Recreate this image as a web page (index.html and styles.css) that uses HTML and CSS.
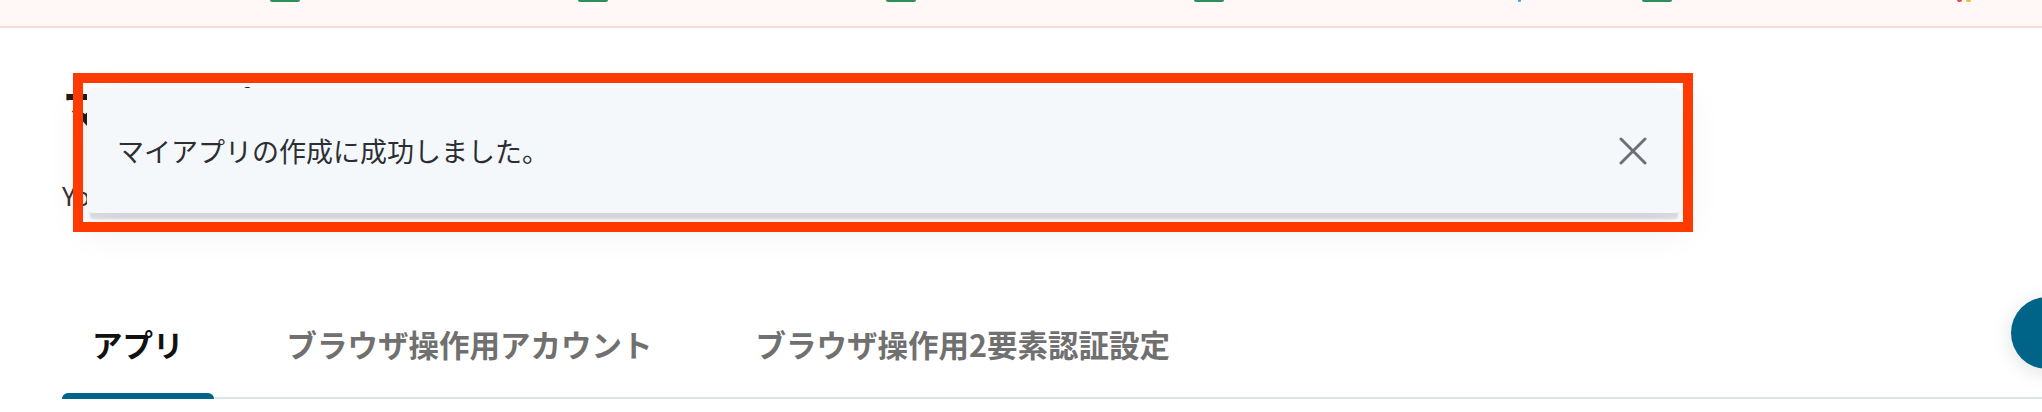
FILE: index.html
```html
<!DOCTYPE html>
<html lang="ja">
<head>
    <meta charset="UTF-8">
    <meta name="viewport" content="width=device-width, initial-scale=1.0">
    <title>マイアプリ</title>
    <link rel="stylesheet" href="styles.css">
</head>
<body>
    <!-- Top bar (icons cut off at the top edge) -->
    <header class="topbar">
        <span class="nav-icon green"></span>
        <span class="nav-icon green"></span>
        <span class="nav-icon green"></span>
        <span class="nav-icon green"></span>
        <span class="nav-dot blue"></span>
        <span class="nav-icon green near"></span>
        <span class="nav-dot red"></span>
        <span class="nav-dot yellow"></span>
    </header>

    <!-- Page content -->
    <main class="main-content">
        <h1 class="page-title">マイアプリ</h1>
        <p class="page-sub">Yoomと連携しているアプリの一覧です。</p>

        <nav class="tabs">
            <a class="tab active" href="#">アプリ</a>
            <a class="tab" href="#">ブラウザ操作用アカウント</a>
            <a class="tab" href="#">ブラウザ操作用2要素認証設定</a>
        </nav>
    </main>

    <!-- Toast notification -->
    <div class="toast">
        <span class="toast-text">マイアプリの作成に成功しました。</span>
        <button class="toast-close" type="button" aria-label="閉じる">
            <svg width="28" height="28" viewBox="0 0 28 28" fill="none">
                <path d="M2 2L26 26M26 2L2 26" stroke="#6d7176" stroke-width="3" stroke-linecap="round"/>
            </svg>
        </button>
    </div>
    <div class="highlight"></div>

    <button class="fab" type="button" aria-label="ヘルプ"></button>
</body>
</html>
```

FILE: styles.css
```css
:root {
    --color-primary: #006388;
    --color-text: #2b2e33;
    --color-muted: #707070;
    --color-line: #dfe3ea;
    --font-family: "Noto Sans CJK JP", "Noto Sans", sans-serif;
}

* {
    box-sizing: border-box;
    margin: 0;
    padding: 0;
}

body {
    width: 2042px;
    height: 412px;
    overflow: hidden;
    background: #fff;
    color: var(--color-text);
    font-family: var(--font-family);
}

/* Top bar */
.topbar {
    display: flex;
    align-items: flex-start;
    height: 28px;
    padding-left: 270px;
    background: #fff8f6;
    border-bottom: 2px solid #f9ddd4;
}

.nav-icon {
    width: 30px;
    height: 2px;
    margin-left: 278px;
    border-radius: 0 0 3px 3px;
}

.nav-icon:first-child {
    margin-left: 0;
}

.nav-icon.near {
    margin-left: 121px;
}

.nav-dot {
    width: 5px;
    height: 2px;
    margin-left: 4px;
    border-radius: 0 0 2px 2px;
}

.nav-dot.blue {
    width: 3px;
    margin-left: 294px;
}

.nav-dot.red {
    margin-left: 285px;
}

.green { background: #2f8f5b; }
.blue { background: #2ea8f0; }
.red { background: #f0405a; }
.yellow { background: #f9b829; }

/* Main */
.main-content {
    padding: 49px 0 0 62px;
}

.page-title {
    font-size: 48px;
    line-height: 60px;
    font-weight: 700;
    color: #1d1d1f;
}

.page-sub {
    margin-top: 41px;
    font-size: 26px;
    line-height: 34px;
    color: #333;
}

/* Tabs */
.tabs {
    display: flex;
    gap: 43px;
    margin-top: 112px;
    border-bottom: 2px solid var(--color-line);
}

.tab {
    position: relative;
    padding: 0 30px 33px;
    font-size: 30.5px;
    line-height: 40px;
    font-weight: 700;
    color: var(--color-muted);
    text-decoration: none;
}

.tab.active {
    color: #111;
}

.tab.active::after {
    content: "";
    position: absolute;
    left: 0;
    right: 0;
    bottom: -2px;
    height: 6px;
    border-radius: 6px 6px 0 0;
    background: var(--color-primary);
}

/* Toast */
.toast {
    position: absolute;
    top: 88px;
    left: 87px;
    width: 1594px;
    height: 125px;
    display: flex;
    align-items: center;
    justify-content: space-between;
    padding: 0 34px 0 30px;
    background: #f5f8fb;
    border-radius: 6px;
    box-shadow: 0 9px 2px -3px rgba(20, 25, 45, 0.12), 0 12px 40px rgba(30, 40, 80, 0.1);
}

.toast-text {
    font-size: 27px;
    line-height: 34px;
    color: var(--color-text);
}

.toast-close {
    display: flex;
    border: none;
    background: none;
    cursor: pointer;
}

/* Annotation frame */
.highlight {
    position: absolute;
    top: 73px;
    left: 73px;
    width: 1620px;
    height: 159px;
    border: 10px solid #ff3a00;
}

/* Floating button */
.fab {
    position: absolute;
    top: 297px;
    left: 2011px;
    width: 72px;
    height: 72px;
    border: none;
    border-radius: 50%;
    background: var(--color-primary);
    box-shadow: 0 4px 20px rgba(0, 0, 0, 0.12);
}
```
